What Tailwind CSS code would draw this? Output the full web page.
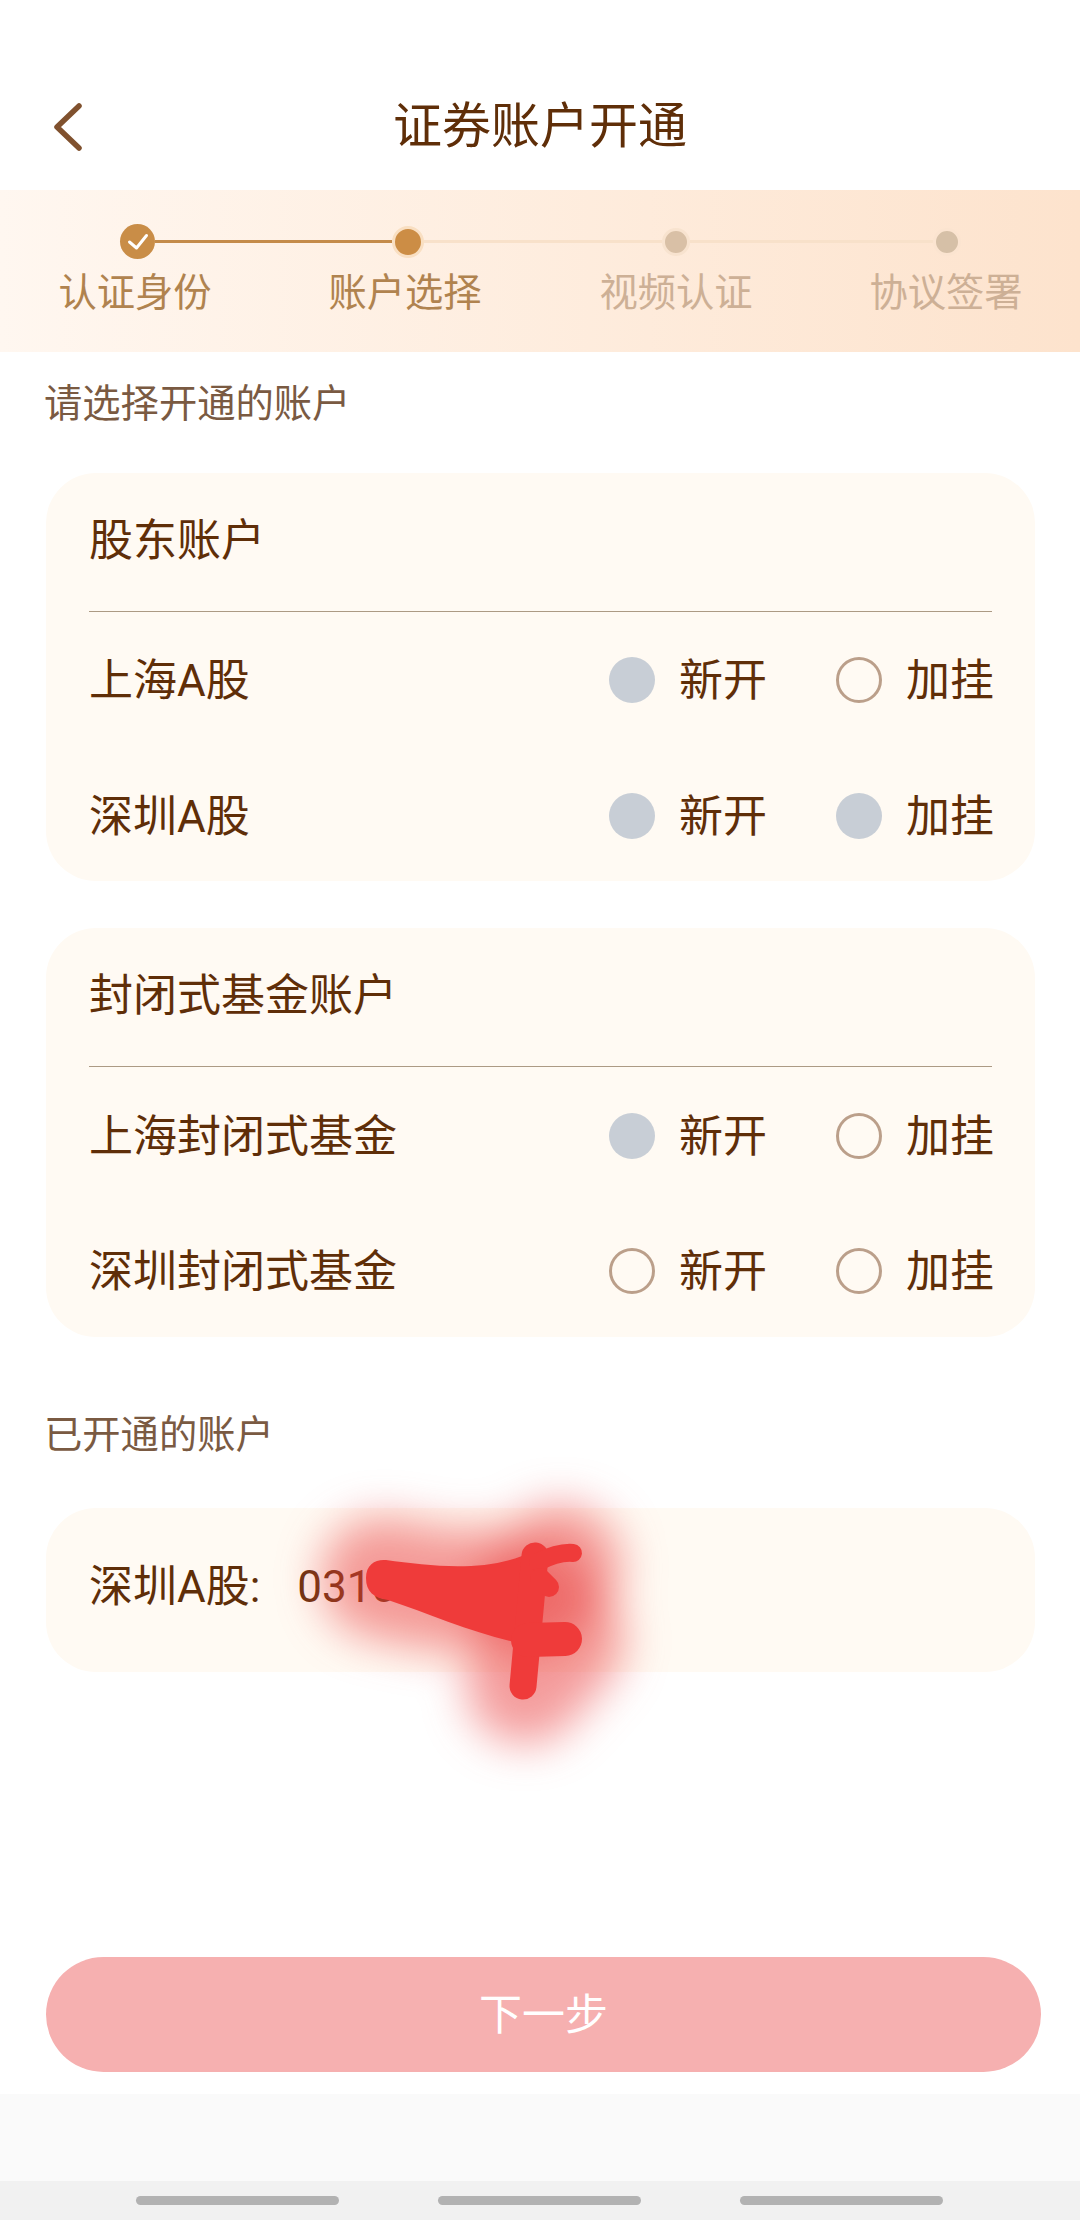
<!DOCTYPE html>
<html lang="zh-CN">
<head>
    <meta charset="UTF-8">
    <meta name="viewport" content="width=device-width, initial-scale=1.0">
    <title>证券账户开通</title>
    <script src="https://cdn.jsdelivr.net/npm/@tailwindcss/browser@4"></script>
</head>
<body class="bg-white">
<div class="relative w-[1080px] h-[2220px] overflow-hidden bg-white font-['Roboto','Noto_Sans_CJK_SC',sans-serif] text-[#5f2e08]">

    <!-- Header -->
    <header class="relative h-[190px] pt-[60px]">
        <div class="h-[130px] flex items-center justify-center">
            <h1 class="text-[49px] leading-[60px] font-normal translate-y-[2px]">证券账户开通</h1>
        </div>
        <svg class="absolute left-[50px] top-[100px] w-[36px] h-[54px]" viewBox="50 100 36 54" fill="none">
            <path d="M79 106 L57 127 L79 148" stroke="#80512e" stroke-width="5.5" stroke-linecap="round" stroke-linejoin="round"/>
        </svg>
    </header>

    <!-- Steps -->
    <section class="h-[162px] bg-gradient-to-r from-[#fff7f0] to-[#fde3cd] pt-[34px]">
        <div class="flex items-center h-[35px] ml-[120px]">
            <div class="w-[35px] h-[35px] rounded-full bg-[#c98d47] flex items-center justify-center shrink-0">
                <svg class="w-[24px] h-[24px]" viewBox="0 0 24 24" fill="none">
                    <path d="M3.5 12 L10.5 18 L20.5 5.5" stroke="#fff" stroke-width="3" stroke-linecap="round" stroke-linejoin="round"/>
                </svg>
            </div>
            <div class="w-[237px] h-[3px] bg-[#c48b4a]"></div>
            <div class="w-[32px] h-[32px] rounded-full bg-[#cc8d45] border-[3px] border-[#f9dfc2] shrink-0"></div>
            <div class="w-[238px] h-[3px] bg-[#f8e1ca]"></div>
            <div class="w-[28px] h-[28px] rounded-full bg-[#d9c0a6] border-[3px] border-[#f8e3cf] shrink-0"></div>
            <div class="w-[243px] h-[3px] bg-[#f8e1ca]"></div>
            <div class="w-[28px] h-[28px] rounded-full bg-[#d6c0a7] border-[3px] border-[#fbe4d0] shrink-0"></div>
        </div>
        <div class="grid grid-cols-[repeat(4,270px)] mt-[9px] text-[38.3px] leading-[50px] text-center whitespace-nowrap">
            <span class="text-[#b0834f]">认证身份</span>
            <span class="text-[#b0834f]">账户选择</span>
            <span class="text-[#cdb096] ml-[2px]">视频认证</span>
            <span class="text-[#cdb096] ml-[2px]">协议签署</span>
        </div>
    </section>

    <p class="mt-[27px] ml-[44px] text-[38.3px] leading-[50px] text-[#7a5a42]">请选择开通的账户</p>

    <!-- 股东账户 -->
    <div class="mt-[44px] ml-[46px] w-[989px] h-[408px] rounded-[50px] bg-[#fffaf3] px-[43px]">
        <div class="h-[139px] pb-[2px] flex items-center text-[44px] leading-[56px] border-b-[1.5px] border-[#ac9a84]">股东账户</div>
        <div class="h-[136px] flex items-center text-[44px] leading-[56px] whitespace-nowrap">
            <span class="pt-[2px]">上海A股</span>
            <div class="ml-auto w-[46px] h-[46px] rounded-full bg-[#c8ced6]"></div>
            <span class="ml-[24px] w-[85px] pt-[2px]">新开</span>
            <div class="ml-[72px] w-[46px] h-[46px] rounded-full border-[3px] border-[#bb9f8a]"></div>
            <span class="ml-[24px] w-[86px] pt-[2px]">加挂</span>
        </div>
        <div class="h-[136px] flex items-center text-[44px] leading-[56px] whitespace-nowrap">
            <span class="pt-[2px]">深圳A股</span>
            <div class="ml-auto w-[46px] h-[46px] rounded-full bg-[#c8ced6]"></div>
            <span class="ml-[24px] w-[85px] pt-[2px]">新开</span>
            <div class="ml-[72px] w-[46px] h-[46px] rounded-full bg-[#c8ced6]"></div>
            <span class="ml-[24px] w-[86px] pt-[2px]">加挂</span>
        </div>
    </div>

    <!-- 封闭式基金账户 -->
    <div class="mt-[47px] ml-[46px] w-[989px] h-[409px] rounded-[50px] bg-[#fffaf3] px-[43px]">
        <div class="h-[139px] pb-[2px] flex items-center text-[44px] leading-[56px] border-b-[1.5px] border-[#ac9a84]">封闭式基金账户</div>
        <div class="h-[138px] flex items-center text-[44px] leading-[56px] whitespace-nowrap">
            <span class="pt-[2px]">上海封闭式基金</span>
            <div class="ml-auto w-[46px] h-[46px] rounded-full bg-[#c8ced6]"></div>
            <span class="ml-[24px] w-[85px] pt-[2px]">新开</span>
            <div class="ml-[72px] w-[46px] h-[46px] rounded-full border-[3px] border-[#bb9f8a]"></div>
            <span class="ml-[24px] w-[86px] pt-[2px]">加挂</span>
        </div>
        <div class="h-[132px] flex items-center text-[44px] leading-[56px] whitespace-nowrap">
            <span class="pt-[2px]">深圳封闭式基金</span>
            <div class="ml-auto w-[46px] h-[46px] rounded-full border-[3px] border-[#bb9f8a]"></div>
            <span class="ml-[24px] w-[85px] pt-[2px]">新开</span>
            <div class="ml-[72px] w-[46px] h-[46px] rounded-full border-[3px] border-[#bb9f8a]"></div>
            <span class="ml-[24px] w-[86px] pt-[2px]">加挂</span>
        </div>
    </div>

    <p class="mt-[73px] ml-[44px] text-[38.3px] leading-[50px] text-[#7a5a42]">已开通的账户</p>

    <!-- 已开通 -->
    <div class="mt-[48px] ml-[46px] w-[989px] h-[164px] rounded-[50px] bg-[#fffaf3] px-[43px] pb-[7px] flex items-center text-[44px] leading-[56px]">
        <span>深圳A股:</span>
        <span class="ml-[37px] text-[#6b3410]">0310</span>
    </div>

    <button class="block mt-[285px] ml-[46px] w-[995px] h-[115px] rounded-full bg-[#f6b0b0] text-white text-[43px] leading-[56px]">下一步</button>

    <div class="mt-[22px] h-[87px] bg-[#fafafa]"></div>

    <!-- Nav bar -->
    <div class="h-[39px] bg-[#f1f1f1] pt-[15px] pl-[136px] flex gap-[99px]">
        <div class="w-[203px] h-[9px] rounded-full bg-[#b2b2b2]"></div>
        <div class="w-[203px] h-[9px] rounded-full bg-[#b2b2b2]"></div>
        <div class="w-[203px] h-[9px] rounded-full bg-[#b2b2b2]"></div>
    </div>

    <!-- 涂抹遮挡 -->
    <svg class="absolute left-[240px] top-[1440px] w-[460px] h-[380px] blur-[22px]" viewBox="240 1440 460 380" fill="none">
        <path d="M382 1578 L440 1590 L530 1590 L560 1565" stroke="#e93c3c" stroke-opacity=".5" stroke-width="122" stroke-linecap="round" stroke-linejoin="round"/>
        <path d="M530 1600 L565 1640 L525 1685" stroke="#e93c3c" stroke-opacity=".5" stroke-width="118" stroke-linecap="round" stroke-linejoin="round"/>
    </svg>
    <svg class="absolute left-[280px] top-[1470px] w-[400px] h-[320px]" viewBox="280 1470 400 320" fill="#ef3b3a">
        <path d="M366 1578 C366 1564 376 1559 386 1560 C430 1566 480 1572 522 1556 L524 1644 C480 1636 430 1614 388 1600 C374 1598 366 1592 366 1578 Z"/>
        <path d="M535 1556 L523 1686" stroke="#ef3b3a" stroke-width="27" stroke-linecap="round"/>
        <path d="M538 1562 C550 1556 562 1552 573 1553" stroke="#ef3b3a" stroke-width="18" fill="none" stroke-linecap="round"/>
        <path d="M540 1578 L549 1587" stroke="#ef3b3a" stroke-width="20" stroke-linecap="round"/>
        <path d="M528 1640 L565 1639" stroke="#ef3b3a" stroke-width="34" fill="none" stroke-linecap="round"/>
    </svg>

</div>
</body>
</html>
